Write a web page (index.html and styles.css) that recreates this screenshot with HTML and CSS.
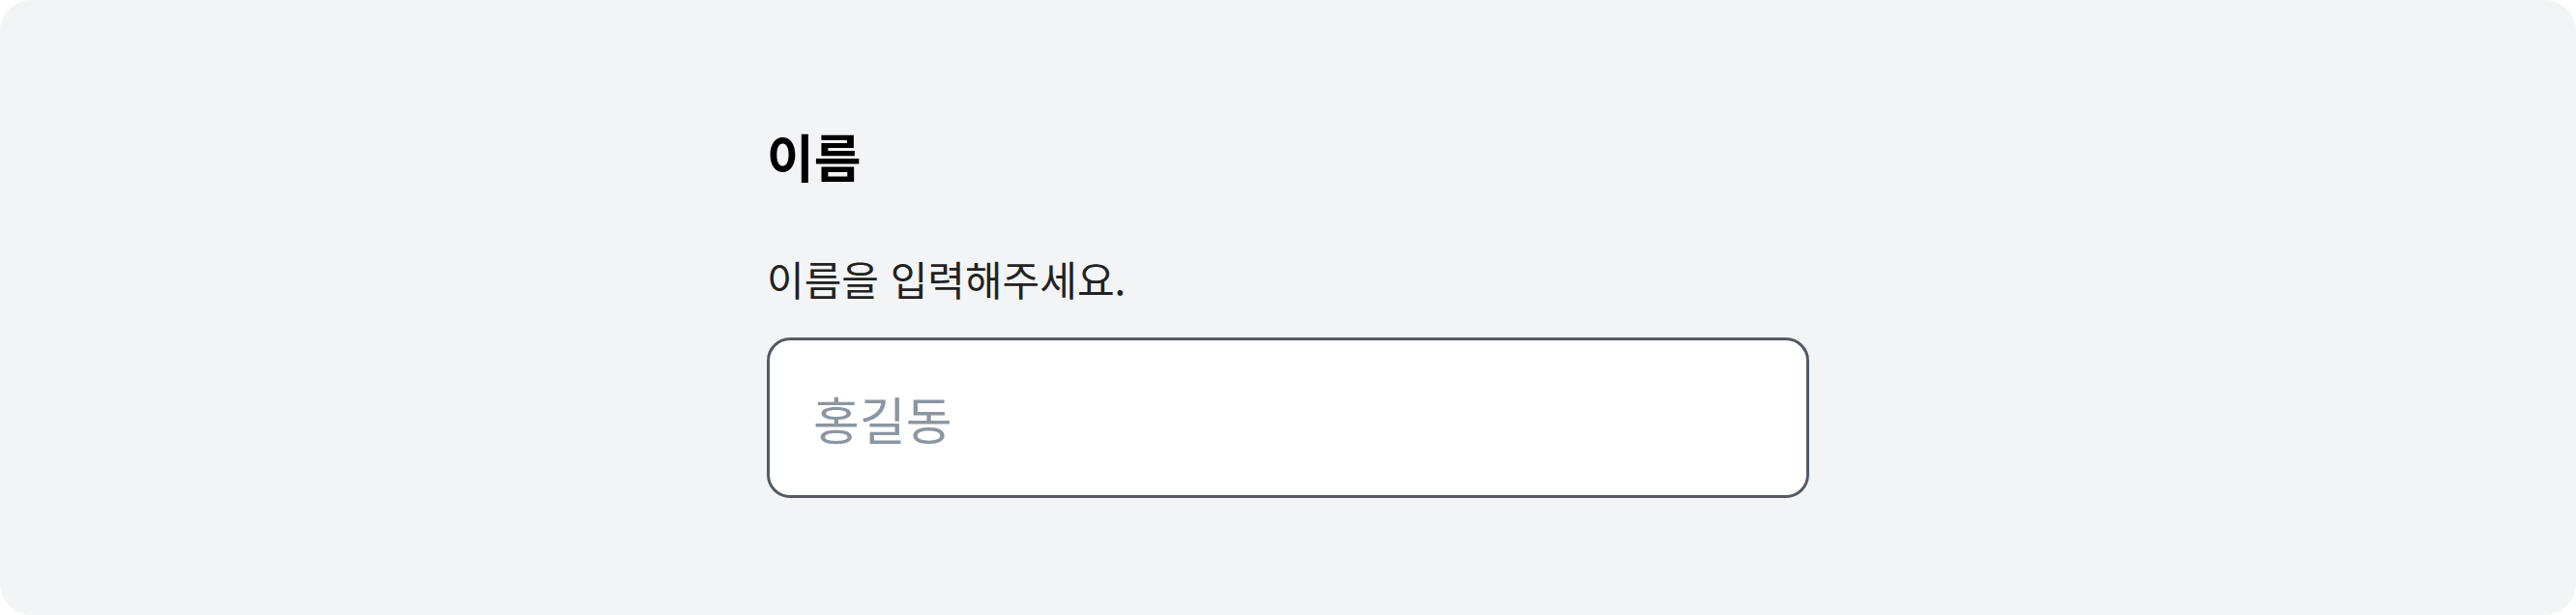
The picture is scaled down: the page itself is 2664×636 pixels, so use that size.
FILE: index.html
```html
<!DOCTYPE html>
<html lang="ko">
<head>
<meta charset="utf-8">
<link rel="stylesheet" href="styles.css">
</head>
<body>
<div class="page">
  <div class="content">
    <h1 class="title">이름</h1>
    <p class="desc">이름을 입력해주세요.</p>
    <input class="field" type="text" placeholder="홍길동">
  </div>
</div>
</body>
</html>
```
FILE: styles.css
```css
html, body {
  margin: 0;
  padding: 0;
  background: #ffffff;
}
body {
  font-family: "Noto Sans CJK KR", "Noto Sans", sans-serif;
}
.page {
  height: 636px;
  background: #f3f4f6;
  border-radius: 32px;
  display: flex;
  justify-content: center;
  box-sizing: border-box;
  padding-top: 131px;
}
.content {
  width: 1078px;
  display: flex;
  flex-direction: column;
}
.title {
  margin: 0;
  font-size: 53px;
  line-height: 60px;
  font-weight: 700;
  color: #000000;
}
.desc {
  margin: 73px 0 0 0;
  font-size: 42px;
  line-height: 48px;
  color: #222222;
}
.field {
  margin-top: 37px;
  box-sizing: border-box;
  width: 1078px;
  height: 166px;
  border: 3px solid #535b66;
  border-radius: 24px;
  background: #ffffff;
  padding: 0 45px;
  font-family: "Noto Sans CJK KR", "Noto Sans", sans-serif;
  font-size: 52px;
  color: #111111;
  outline: none;
}
.field::placeholder {
  color: #8c96a1;
}
```
